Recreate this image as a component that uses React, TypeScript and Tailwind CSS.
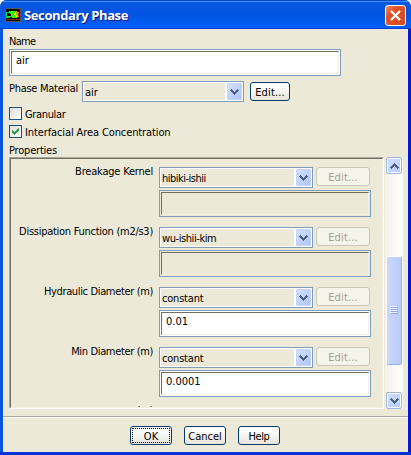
import { useState } from "react";
import clsx from "clsx";

const properties = [
  { label: "Breakage Kernel", method: "hibiki-ishii", value: "", labelClass: "tracking-[-0.2px]", methodClass: "tracking-[-0.5px]" },
  { label: "Dissipation Function (m2/s3)", method: "wu-ishii-kim", value: "", labelClass: "tracking-[-0.27px]", methodClass: "tracking-[-0.42px]" },
  { label: "Hydraulic Diameter (m)", method: "constant", value: "0.01", labelClass: "tracking-[-0.35px]", methodClass: "tracking-[-0.2px]" },
  { label: "Min Diameter (m)", method: "constant", value: "0.0001", labelClass: "tracking-[-0.35px]", methodClass: "tracking-[-0.2px]" },
];

function Chevron({ up }: { up?: boolean }) {
  return (
    <svg width="9" height="6" viewBox="0 0 9 6" shapeRendering="crispEdges" className={clsx(up && "rotate-180")}>
      <path d="M1 0h1v1h1v1h1v1h1v-1h1v-1h1v-1h1v1h1v1h-1v1h-1v1h-1v1h-1v1h-1v-1h-1v-1h-1v-1h-1v-1h-1v-1h1z" fill="#4d6185" />
    </svg>
  );
}

function Select({ value, className, textClass }: { value: string; className?: string; textClass?: string }) {
  return (
    <div className={clsx("flex h-[21px] shrink-0 items-center border border-[#7f9db9] bg-white p-px", className)}>
      <div className="h-full flex-1 bg-[#ece9d8] pl-px">
        <span className={clsx("block leading-[20px]", textClass)}>{value}</span>
      </div>
      <div className="ml-[2px] flex h-[17px] w-[15px] items-center justify-center rounded-[1px] border border-[#c3d3fd] bg-linear-to-br from-[#d3e0fe] to-[#b0c6f8]">
        <Chevron />
      </div>
    </div>
  );
}

function TextField({ value, className, disabled }: { value: string; className?: string; disabled?: boolean }) {
  return (
    <div className={clsx("h-[27px] shrink-0 border border-[#7f9db9] p-px", disabled ? "bg-[#ece9d8]" : "bg-white", className)}>
      <div className="h-[23px] border border-t-[#716f64] border-r-[#f1efe2] border-b-[#f1efe2] border-l-[#716f64] pl-1">
        <span className="block leading-[17px]">{value}</span>
      </div>
    </div>
  );
}

function Button({ children, className, disabled, focused }: { children: string; className?: string; disabled?: boolean; focused?: boolean }) {
  return (
    <button
      disabled={disabled}
      className={clsx(
        "flex h-[19px] shrink-0 items-center justify-center rounded-[3px] border p-px leading-[15px]",
        disabled
          ? "border-[#c9c7ba] bg-[#f5f4ea] text-[#a1a192]"
          : "border-[#003c74] bg-linear-to-b from-white from-20% to-[#e6e4da]",
        className
      )}
    >
      <span className={clsx("flex h-full w-full items-center justify-center pt-[2px]", focused && "border border-dotted border-black")}>{children}</span>
    </button>
  );
}

function Checkbox({ label, defaultChecked = false, textClass }: { label: string; defaultChecked?: boolean; textClass?: string }) {
  const [checked, setChecked] = useState<boolean>(defaultChecked);
  return (
    <div className="flex h-[18px] items-start" onClick={() => setChecked(!checked)}>
      <div className="flex size-[13px] items-center justify-center border border-[#1c5180] bg-linear-to-br from-[#dcdcd7] to-white">
        {checked && (
          <svg width="7" height="7" viewBox="0 0 7 7" shapeRendering="crispEdges">
            <path d="M0 2h1v1h1v1h1v-1h1v-1h1v-1h1v-1h1v3h-1v1h-1v1h-1v1h-1v1h-1v-1h-1v-1h-1z" fill="#3a9d55" />
          </svg>
        )}
      </div>
      <span className={clsx("ml-[3px] leading-[15px]", textClass)}>{label}</span>
    </div>
  );
}

function AppIcon() {
  return (
    <svg width="16" height="14" viewBox="0 0 16 14" shapeRendering="crispEdges">
      <path d="M0 0h16v14H0z" fill="#55585c" />
      <path d="M1 1h14v12H1z" fill="#000" />
      <path d="M1 4h4v6H1z" fill="#00d840" />
      <path d="M4 3h8v1h2v5h-2v1H7V9H4z" fill="#30f010" />
      <path d="M2 5h3v1h1v2H2z" fill="#000" />
      <path d="M10 3h2v1h2v5h-1V7h-1V5h-2z" fill="#ff9000" />
      <path d="M9 5h2v2h1v2h-2V7H9z" fill="#e8f800" />
      <path d="M13 5h1v3h-1z" fill="#e00000" />
      <path d="M1 11h14v1H1z" fill="#7a2a10" />
    </svg>
  );
}

function ScrollBar() {
  return (
    <div className="ml-px flex h-[252px] w-[18px] flex-col bg-linear-to-r from-[#f3f1ec] to-[#fefefb] pl-px">
      <div className="flex h-[17px] w-4 items-center justify-center rounded-[2px] border border-[#9cb4e0] bg-linear-to-br from-[#d5e1ff] to-[#b4c9fa] ring-1 ring-white ring-inset">
        <Chevron up />
      </div>
      <div className="mt-[82px] flex h-[109px] w-4 flex-col items-center justify-center gap-px rounded-[2px] border border-[#98b0e4] border-t-white border-l-white bg-linear-to-r from-[#c9d8fc] to-[#b9cbf9]">
        {[0, 1, 2, 3].map((i) => (
          <div key={i} className="h-px w-[7px] bg-[#8ca6e4] shadow-[-1px_-1px_0_#eef4fe]" />
        ))}
      </div>
      <div className="mt-auto flex h-[17px] w-4 items-center justify-center rounded-[2px] border border-[#9cb4e0] bg-linear-to-br from-[#d5e1ff] to-[#b4c9fa] ring-1 ring-white ring-inset">
        <Chevron />
      </div>
    </div>
  );
}

export default function App() {
  return (
    <div className="h-[455px] w-[411px] overflow-hidden bg-white font-['DejaVu_Sans_Condensed','DejaVu_Sans',sans-serif] text-[11px] whitespace-nowrap text-black">
      <div className="flex h-full flex-col overflow-hidden rounded-t-[7px] bg-[#0831d9]">
        {/* Title bar */}
        <div className="flex h-[29px] shrink-0 items-center bg-linear-to-b from-[#0a58e0] via-[#0054e3] to-[#0062fb] pr-[5px] pl-[5px] shadow-[inset_0_1px_0_#0a48c8,inset_0_2px_0_#3a91ff,inset_0_-1px_0_#003dd0]">
          <AppIcon />
          <span className="mt-px ml-[3px] flex-1 font-['Open_Sans',sans-serif] text-[13px] leading-[28px] font-bold tracking-[-0.37px] text-white [text-shadow:1px_1px_0_#0a1883]">
            Secondary Phase
          </span>
          <button className="mt-[2px] flex size-[21px] items-center justify-center rounded-[3px] border border-white bg-linear-to-br from-[#ec8a6c] via-[#e2532a] via-30% to-[#d8481c]">
            <svg width="13" height="13" viewBox="0 0 13 13">
              <path d="M2 2l9 9M11 2l-9 9" stroke="#fff" strokeWidth="2.2" />
            </svg>
          </button>
        </div>

        <div className="mb-[3px] flex-1 border-r-[3px] border-l-[3px] border-r-[#0019cf] border-l-[#0855dd] bg-[#ece9d8]">
          <div className="flex h-[387px] flex-col pt-[5px] pl-[6px]">
            <span className="h-[15px] leading-[15px] tracking-[-0.7px]">Name</span>
            <TextField value="air" className="w-[332px]" />
            <div className="mt-[5px] flex h-[26px]">
              <span className="w-[73px] leading-[16px] tracking-[-0.28px]">Phase Material</span>
              <Select value="air" className="w-[162px]" />
              <Button className="mt-px ml-[6px] w-10 tracking-[0.15px]">Edit...</Button>
            </div>
            <Checkbox label="Granular" textClass="tracking-[-0.35px]" />
            <Checkbox label="Interfacial Area Concentration" defaultChecked textClass="tracking-[-0.11px]" />
            <span className="h-[14px] leading-[15px] tracking-[-0.2px]">Properties</span>

            <div className="flex">
              <div className="h-[252px] w-[375px] border-t border-r border-b border-l border-t-[#aca899] border-r-white border-b-white border-l-[#aca899]">
                <div className="h-[250px] overflow-hidden border border-t-[#716f64] border-r-[#f1efe2] border-b-[#f1efe2] border-l-[#716f64] pt-2">
                  {properties.map((p) => (
                    <div key={p.label} className="flex h-[60px]">
                      <span className={clsx("w-[142px] text-right leading-[9px]", p.labelClass)}>{p.label}</span>
                      <div className="ml-[6px] flex flex-col gap-[2px]">
                        <div className="flex gap-[3px]">
                          <Select value={p.method} className="w-[154px]" textClass={p.methodClass} />
                          <Button disabled className="w-[54px] tracking-[0.15px]">Edit...</Button>
                        </div>
                        <TextField value={p.value} disabled={!p.value} className="w-[212px]" />
                      </div>
                    </div>
                  ))}
                  {/* unit of the next row, scrolled mostly out of view */}
                  <div className="-mt-px w-[142px] text-right leading-[9px] tracking-[-0.35px]">(m)</div>
                </div>
              </div>
              <ScrollBar />
            </div>
          </div>

          {/* Dialog buttons */}
          <div className="flex justify-start gap-3 border-t border-[#aca899] pt-[9px] pl-[127px] shadow-[inset_0_1px_0_#fff]">
            <Button focused className="w-[42px]">OK</Button>
            <Button className="w-[42px]">Cancel</Button>
            <Button className="w-[42px] tracking-[-0.4px]">Help</Button>
          </div>
        </div>
      </div>
    </div>
  );
}
